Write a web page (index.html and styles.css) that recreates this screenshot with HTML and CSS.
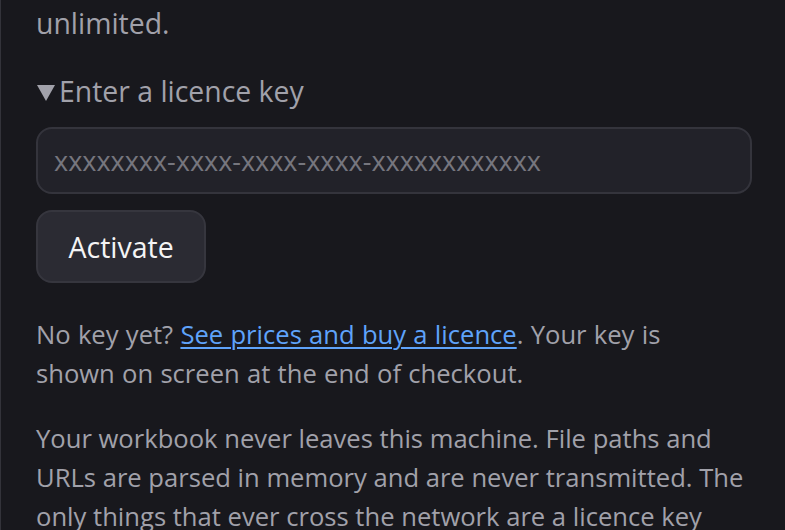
FILE: index.html
```html
<!DOCTYPE html>
<html lang="en">
<head>
<meta charset="utf-8">
<title>Licence</title>
<link rel="stylesheet" href="styles.css">
</head>
<body>
<main class="panel">
  <p class="text lead">unlimited.</p>
  <details class="licence" open>
    <summary class="licence-summary"><span class="marker"></span>Enter a licence key</summary>
    <input class="key-input" type="text" placeholder="xxxxxxxx-xxxx-xxxx-xxxx-xxxxxxxxxxxx">
    <button class="activate" type="button">Activate</button>
  </details>
  <p class="text note">No key yet? <a class="link" href="#">See prices and buy a licence</a>. Your key is shown on screen at the end of checkout.</p>
  <p class="text">Your workbook never leaves this machine. File paths and URLs are parsed in memory and are never transmitted. The only things that ever cross the network are a licence key check and an anonymous version ping.</p>
</main>
</body>
</html>
```
FILE: styles.css
```css
html, body {
  margin: 0;
  padding: 0;
  background: #18181d;
}
body {
  font-family: "Open Sans", "Noto Sans", sans-serif;
  font-size: 25.6px;
  line-height: 39px;
  color: #a1a1aa;
  overflow: hidden;
}
.panel {
  min-height: 100vh;
  box-sizing: border-box;
  border-left: 1px solid #33333a;
  padding: 4px 33px 0 35px;
}
.text {
  margin: 0 0 29px;
}
.lead {
  font-size: 28.4px;
}
.note {
  max-width: 680px;
  margin-bottom: 26px;
  word-spacing: 0.6px;
}
.licence {
  margin: 0 0 32px;
}
.licence-summary {
  list-style: none;
  cursor: pointer;
  margin-bottom: 16px;
  font-size: 28.4px;
}
.licence-summary::-webkit-details-marker {
  display: none;
}
.marker {
  display: inline-block;
  width: 0;
  height: 0;
  border-left: 9px solid transparent;
  border-right: 9px solid transparent;
  border-top: 16px solid #a1a1aa;
  margin: 0 4px 1px 1px;
}
.key-input {
  display: block;
  box-sizing: border-box;
  width: 100%;
  height: 67px;
  margin: 0 0 16px;
  padding: 0 16px;
  background: #222229;
  border: 2px solid #34343c;
  border-radius: 16px;
  color: #e4e4e7;
  font-family: "Open Sans", "Noto Sans", sans-serif;
  font-size: 27px;
  outline: none;
}
.key-input::placeholder {
  color: #76767e;
}
.activate {
  display: block;
  box-sizing: border-box;
  height: 73px;
  padding: 0 30.5px;
  background: #2b2b33;
  border: 2px solid #36363e;
  border-radius: 16px;
  color: #f4f4f5;
  font-family: "Open Sans", "Noto Sans", sans-serif;
  font-size: 28.5px;
  cursor: pointer;
}
.link {
  color: #5fa3fa;
  text-decoration: underline;
  text-decoration-thickness: 2px;
  text-underline-offset: 3px;
}
```
